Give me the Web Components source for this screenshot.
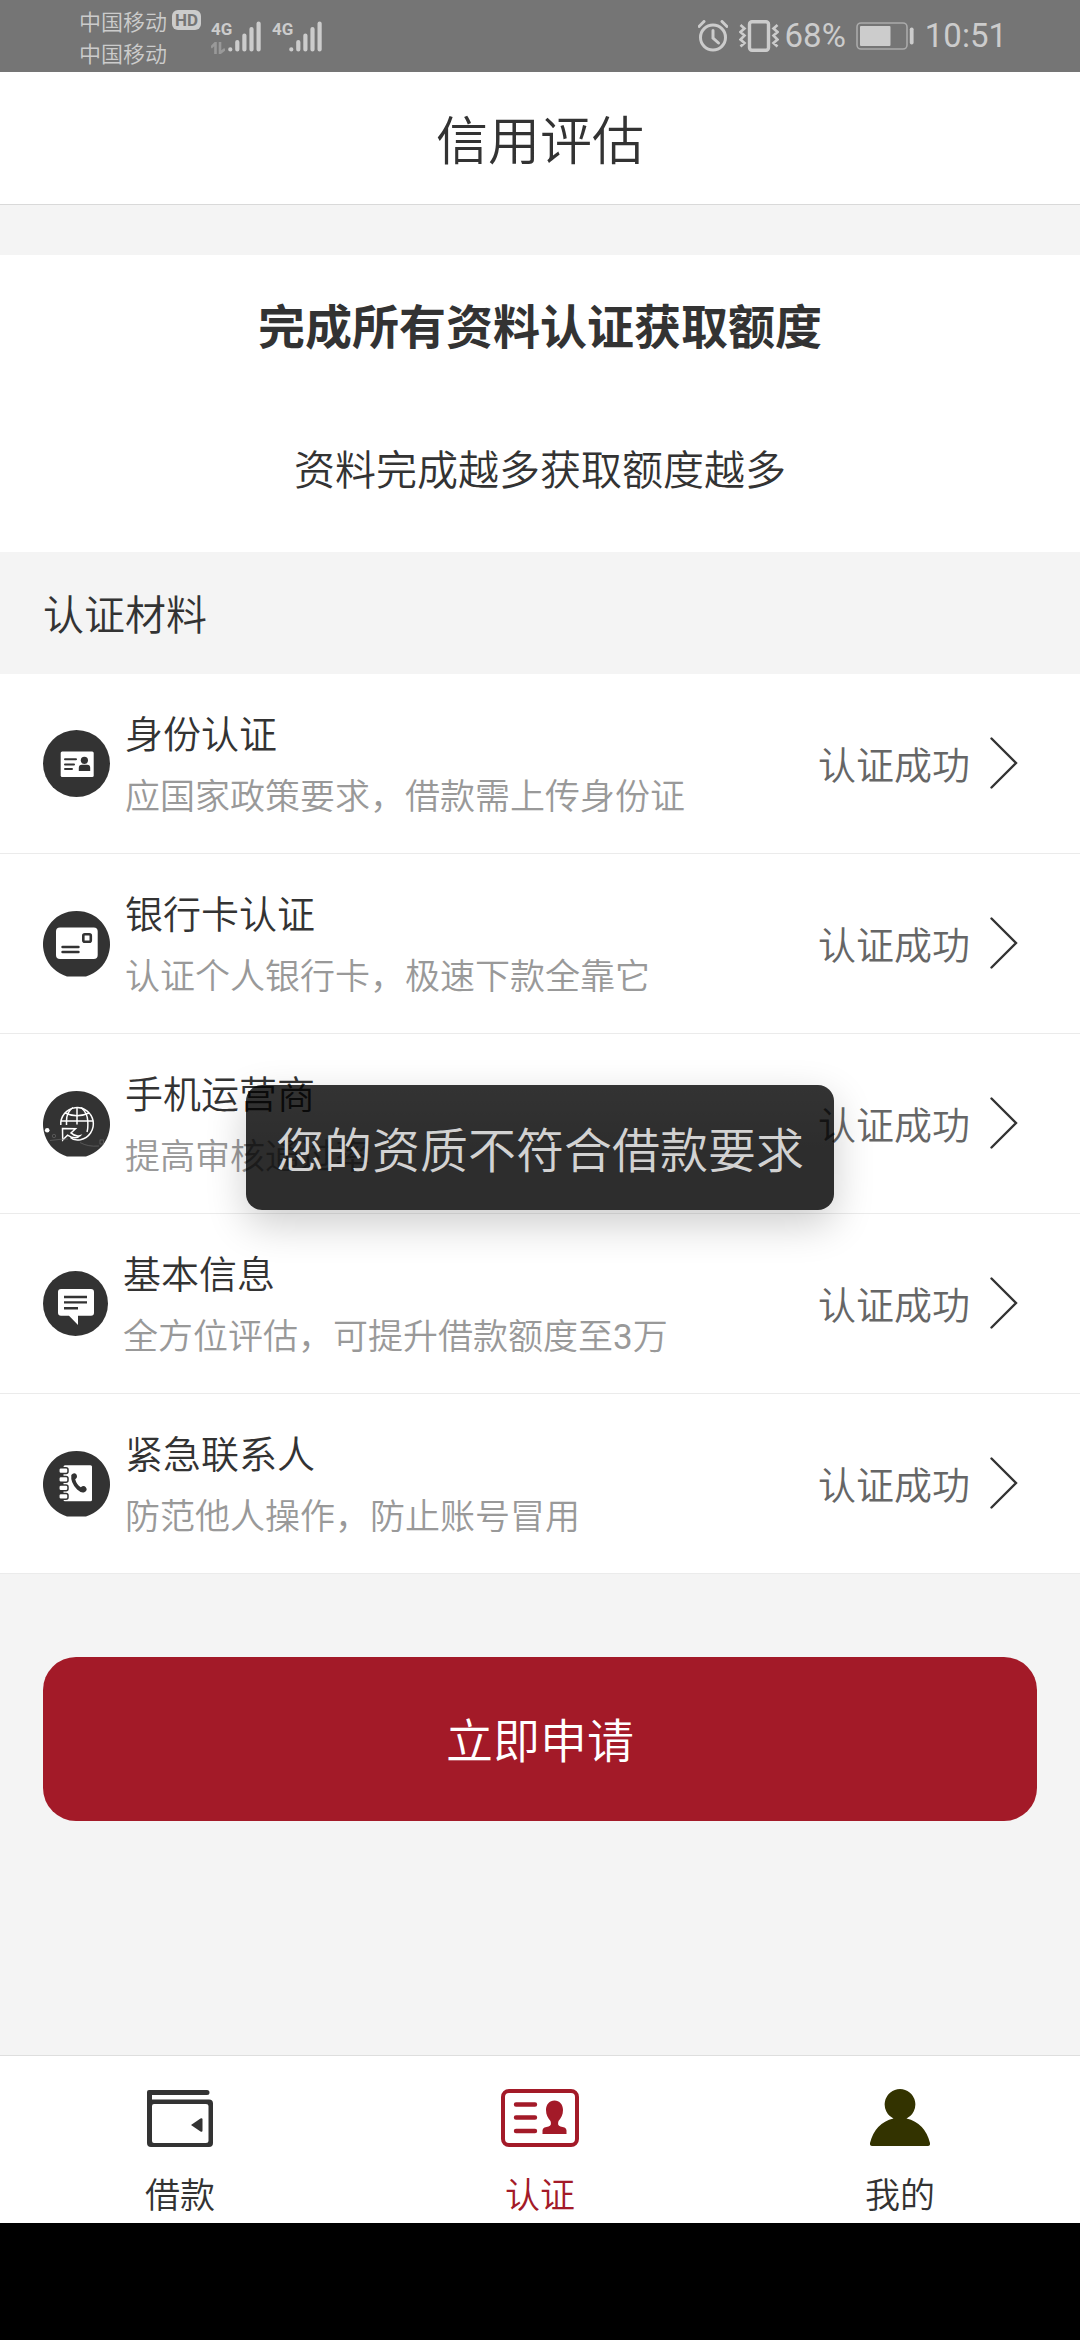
<!DOCTYPE html>
<html lang="zh-CN">
<head>
<meta charset="utf-8">
<meta name="viewport" content="width=device-width, initial-scale=1">
<title>信用评估</title>
<style>
  html, body { margin: 0; }
  body {
    font-family: "Noto Sans CJK SC", sans-serif;
    font-weight: 350;
    color: #333;
    background: #000;
    --ink: #333;
    --brand: #a31a28;
    --page: #f4f4f4;
    --line: #ebebeb;
    --gutter: 43px;
  }
  .num { font-family: Roboto, sans-serif; font-weight: 400; line-height: 1; }
</style>
</head>
<body>
<phone-frame>
  <status-bar slot="status" carrier="中国移动" battery="68%" time="10:51"></status-bar>
  <app-header>信用评估</app-header>
  <intro-card>
    <span slot="title">完成所有资料认证获取额度</span>
    <span slot="note">资料完成越多获取额度越多</span>
  </intro-card>
  <auth-list heading="认证材料">
    <auth-row icon="identity" name="身份认证" state="认证成功">应国家政策要求，借款需上传身份证</auth-row>
    <auth-row icon="card" name="银行卡认证" state="认证成功">认证个人银行卡，极速下款全靠它</auth-row>
    <auth-row icon="carrier" name="手机运营商" state="认证成功">提高审核通过率</auth-row>
    <auth-row icon="message" name="基本信息" state="认证成功">全方位评估，可提升借款额度至<span class="num">3</span>万</auth-row>
    <auth-row icon="contacts" name="紧急联系人" state="认证成功">防范他人操作，防止账号冒用</auth-row>
  </auth-list>
  <apply-button>立即申请</apply-button>
  <tab-bar slot="tabs">
    <tab-item icon="wallet">借款</tab-item>
    <tab-item icon="badge" active>认证</tab-item>
    <tab-item icon="person">我的</tab-item>
  </tab-bar>
  <toast-message slot="overlay">您的资质不符合借款要求</toast-message>
</phone-frame>

<script>
const ICONS = {
  identity: [67, 67, `<circle cx="33.5" cy="33.5" r="33.5" fill="#333"/>
    <rect x="17.7" y="21.5" width="33" height="25.5" rx="1.5" fill="#fff"/>
    <path d="M22 29.3h11M22 34.6h9M22 39h7" stroke="#333" stroke-width="2" stroke-linecap="round"/>
    <circle cx="41.4" cy="30.3" r="3.6" fill="#333"/>
    <path d="M35.8 41v-3.2q0-3 3-3h5.400q3 0 3 3V41z" fill="#333"/>`],
  card: [67, 67, `<path d="M24 66.500A33.500 33.500 0 1 1 43 66.500z" fill="#333"/>
    <rect x="13" y="17.600" width="41.700" height="31.400" rx="4" fill="#fff"/>
    <rect x="40.300" y="24.300" width="7.500" height="7.500" rx="1.500" fill="none" stroke="#333" stroke-width="2.600"/>
    <path d="M19.500 37h16M19.500 42h16" stroke="#333" stroke-width="2.400" stroke-linecap="round"/>`],
  carrier: [67, 67, `<path d="M24 66.500A33.500 33.500 0 1 1 43 66.500z" fill="#333"/>
    <g fill="none" stroke="#fff" stroke-width="1.500">
      <path d="M17.800 35A16.300 16.300 0 1 1 37.500 49.800Q31 51 27.500 47.500"/>
      <path d="M17.800 31h32.500M34 17v17.500M23.500 35V31Q23.500 22 30 17.500M38 17.500Q44.500 23 44.800 31T44 42"/>
      <path d="M22 23Q34 28.500 46 23"/>
      <path d="M19.500 38.500l13 .2-4.500 4.200q4 4 9 2.800-4.500 4.500-12.500-.5l-4.800 4.800z"/>
    </g>
    <circle cx="4.200" cy="40.300" r="2.300" fill="#fff"/>
    <g fill="none" stroke="#666" stroke-width=".7"><circle cx="11" cy="46" r="1.700"/><path d="M7 50.500Q18 49 25 49M37 52.500Q45 57 56 56"/><rect x="57" y="50" width="3.400" height="4"/></g>`],
  message: [65, 65, `<circle cx="32.500" cy="32.500" r="32.500" fill="#333"/>
    <path d="M18 18h30q3 0 3 3v20.700q0 3-3 3H35V54L26 44.700h-8q-3 0-3-3V21q0-3 3-3z" fill="#fff"/>
    <path d="M21 26h23M21 31.400h23M21 37.300h14" stroke="#333" stroke-width="2.400"/>`],
  contacts: [67, 67, `<path d="M24 66.500A33.500 33.500 0 1 1 43 66.500z" fill="#333"/>
    <rect x="20.500" y="15.300" width="28.500" height="36" rx="1.500" fill="#fff"/>
    <g fill="#fff" stroke="#333" stroke-width="1.500"><rect x="15.800" y="17.800" width="9.200" height="5.800" rx="2"/><rect x="15.800" y="26.400" width="9.200" height="5.800" rx="2"/><rect x="15.800" y="34.900" width="9.200" height="5.800" rx="2"/><rect x="15.800" y="43.400" width="9.200" height="5.800" rx="2"/></g>
    <path d="M28.300 25q2.700-3.200 5.200-.5 1.500 3-1.300 4.700 1.300 5.200 5.600 8 3-2.200 5 0 2.400 3-1.500 5-3.300 1-7.200-2.700-6.800-6.800-5.800-14.500z" fill="#333"/>`],
  chevron: [28, 52, `<path d="M1.500 1.500L26 26 1.500 50.500" fill="none" stroke="#333" stroke-width="2.400" stroke-linecap="round"/>`],
  wallet: [66, 58, `<path fill-rule="evenodd" d="M2 1h58q2.500 0 2.500 2.500T60 6H5v4.500h57q4 0 4 4V54q0 4-4 4H4q-4 0-4-4V3q0-2 2-2zM7 15q-2 0-2 2v35q0 2 2 2h52q2.500 0 2.500-2V17q0-2-2.500-2z" fill="#333"/>
    <path d="M44 36l9.500-6.500q2-1 2 1v11q0 2-2 1z" fill="#333"/>`],
  badge: [78, 58, `<rect x="2" y="2" width="74" height="54" rx="6" fill="none" stroke="#a31a28" stroke-width="4"/>
    <path d="M15 15.500h19M15 28.500h19M15 42h19" stroke="#a31a28" stroke-width="4.400" stroke-linecap="round"/>
    <path d="M53.500 11.500c5 0 8.500 4 8.500 9.500 0 5-2 8-4.500 11q-1.500 4.500 2 5.500l4 1q2 .8 2 3V45H41.500v-3.500q0-2.200 2-3l4-1q3.500-1 2-5.500C47 29 45 26 45 21c0-5.500 3.500-9.500 8.500-9.500z" fill="#a31a28"/>`],
  person: [60, 58, `<path d="M30 0a15.500 15.500 0 0 1 6.500 29.500Q55 34 60 54q.5 3-2.500 3h-55Q-.5 57 0 54 5 34 23.500 29.500A15.500 15.500 0 0 1 30 0z" fill="#333300"/>`],
  signal: [34, 32, `<path d="M2.300 29.300v.1M9.300 22v7.400M16.400 15.500v13.900M23.500 9v20.400M30.600 3.500v25.900" stroke="#ccc" stroke-width="4.200" stroke-linecap="round"/>`],
  data: [14, 12, `<path d="M4.500 12V1L0 5.500M9 0v11l5-4" fill="none" stroke="#999" stroke-width="2.600"/>`],
  alarm: [30, 32, `<g fill="none" stroke="#ccc" stroke-width="3"><circle cx="15" cy="17.500" r="12.500"/><path d="M15 10.500V18l5.500 5" stroke-linecap="round"/><path d="M1 6.500L6 1.500M24 1.500l5 5" stroke-linecap="round"/></g>`],
  vibrate: [40, 32, `<g fill="none" stroke="#ccc"><rect x="10.500" y="1.800" width="19" height="28.400" rx="2.500" stroke-width="3.400"/><path d="M1.500 5l4 3.500-4 3.500 4 3.500-4 4 4 3.500-4 3.500M38.500 5l-4 3.500 4 3.500-4 3.500 4 4-4 3.500 4 3.500" stroke-width="2.600"/></g>`],
  battery: [58, 28, `<rect x="1" y="1" width="50" height="26" rx="4" fill="none" stroke="#aaa" stroke-width="1.600"/><rect x="4" y="4" width="30.500" height="20" rx="1" fill="#ccc"/><rect x="53.800" y="5.500" width="3.800" height="17" rx="1.800" fill="#ccc"/>`]
};

function define(name, render) {
  customElements.define(name, class extends HTMLElement {
    connectedCallback() {
      if (this.shadowRoot) return;
      const template = document.createElement('template');
      template.innerHTML = render(this);
      this.attachShadow({ mode: 'open' }).append(template.content.cloneNode(true));
    }
  });
}
const attr = (el, key) => el.getAttribute(key) || '';

define('ui-icon', el => {
  const [w, h, art] = ICONS[attr(el, 'name')];
  return `<style>:host{display:block;flex:none}svg{display:block}</style>
    <svg width="${w}" height="${h}" viewBox="0 0 ${w} ${h}" aria-hidden="true">${art}</svg>`;
});

define('phone-frame', () => `
  <style>
    :host { display: flex; flex-direction: column; min-height: 100vh; }
    .app { position: relative; flex: 1; display: flex; flex-direction: column; background: var(--page); }
    main { flex: 1; }
    .overlay { position: absolute; inset: 0; display: flex; align-items: center; justify-content: center; pointer-events: none; }
    .nav { height: 117px; background: #000; }
  </style>
  <slot name="status"></slot>
  <div class="app">
    <main><slot></slot></main>
    <slot name="tabs"></slot>
    <div class="overlay"><slot name="overlay"></slot></div>
  </div>
  <div class="nav"></div>`);

define('status-bar', el => `
  <style>
    :host { display: flex; justify-content: space-between; align-items: center; height: 72px; box-sizing: border-box; padding: 0 73px 0 79px; background: #757575; color: #ccc; }
    .left, .right, .line, .net { display: flex; }
    .left { gap: 10px; }
    .line { align-items: center; gap: 5px; font-size: 22px; line-height: 32px; }
    .hd { font: 700 17px/20px Roboto, sans-serif; padding: 0 3px; border-radius: 6px; background: #ccc; color: #757575; }
    .nets { display: flex; gap: 10px; align-items: center; }
    .kind { font: 700 17px/18px Roboto, sans-serif; width: 17px; display: flex; flex-direction: column; gap: 4px; height: 32px; }
    .right { align-items: center; font: 400 33px/40px Roboto, sans-serif; }
    .alarm { margin-right: 11px; }
    .level { margin: 0 10px 0 6px; }
    .clock { margin-left: 11px; }
  </style>
  <div class="left">
    <div>
      <div class="line">${attr(el, 'carrier')}<span class="hd">HD</span></div>
      <div class="line">${attr(el, 'carrier')}</div>
    </div>
    <div class="nets">
      <div class="net"><span class="kind">4G<ui-icon name="data"></ui-icon></span><ui-icon name="signal"></ui-icon></div>
      <div class="net"><span class="kind">4G</span><ui-icon name="signal"></ui-icon></div>
    </div>
  </div>
  <div class="right">
    <ui-icon class="alarm" name="alarm"></ui-icon>
    <ui-icon name="vibrate"></ui-icon>
    <span class="level">${attr(el, 'battery')}</span>
    <ui-icon name="battery"></ui-icon>
    <time class="clock">${attr(el, 'time')}</time>
  </div>`);

define('app-header', () => `
  <style>
    :host { display: block; background: #fff; border-bottom: 1px solid #d9d9d9; }
    h1 { margin: 0; font-size: 52px; font-weight: inherit; line-height: 132px; text-align: center; }
  </style>
  <h1><slot></slot></h1>`);

define('intro-card', () => `
  <style>
    :host { display: flex; flex-direction: column; gap: 77px; margin-top: 50px; padding: 34px 0 54px; background: #fff; text-align: center; }
    h2, p { margin: 0; }
    h2 { font-size: 47px; line-height: 70px; font-weight: 700; }
    p { font-size: 41px; line-height: 62px; }
  </style>
  <h2><slot name="title"></slot></h2>
  <p><slot name="note"></slot></p>`);

define('auth-list', el => `
  <style>
    :host { display: block; }
    h3 { margin: 0; padding: 29px var(--gutter) 31px; font-size: 41px; line-height: 62px; font-weight: inherit; }
  </style>
  <h3>${attr(el, 'heading')}</h3>
  <slot></slot>`);

define('auth-row', el => `
  <style>
    :host { display: block; background: #fff; border-bottom: 1px solid var(--line); }
    a { display: flex; align-items: center; padding: 27px 62px 28px var(--gutter); color: inherit; text-decoration: none; line-height: 62px; }
    .text { flex: 1; margin-left: 15px; }
    .name { font-size: 38px; }
    .desc { font-size: 35px; color: #999; }
    .state { font-size: 38px; color: #666; margin-right: 20px; }
  </style>
  <a href="#">
    <ui-icon name="${attr(el, 'icon')}"></ui-icon>
    <div class="text">
      <div class="name">${attr(el, 'name')}</div>
      <div class="desc"><slot></slot></div>
    </div>
    <span class="state">${attr(el, 'state')}</span>
    <ui-icon name="chevron"></ui-icon>
  </a>`);

define('apply-button', () => `
  <style>
    :host { display: block; padding: 83px var(--gutter); }
    button { display: block; width: 100%; padding: 46px 0 48px; border: 0; border-radius: 33px; background: var(--brand); color: #fff; font: inherit; font-size: 47px; line-height: 70px; }
  </style>
  <button type="button"><slot></slot></button>`);

define('tab-bar', () => `
  <style>
    :host { display: block; background: #fff; border-top: 1px solid #dedede; }
    nav { display: flex; }
  </style>
  <nav><slot></slot></nav>`);

define('tab-item', el => `
  <style>
    :host { display: block; flex: 1; color: var(--ink); }
    :host([active]) { color: var(--brand); }
    a { display: flex; flex-direction: column; align-items: center; gap: 21px; padding: 33px 0 5px; color: inherit; text-decoration: none; font-size: 35px; line-height: 50px; }
  </style>
  <a href="#"><ui-icon name="${attr(el, 'icon')}"></ui-icon><span><slot></slot></span></a>`);

define('toast-message', () => `
  <style>
    :host { display: block; padding: 27px 30px; border-radius: 16px; color: #d2d2d2; font-size: 48px; line-height: 71px;
      background: linear-gradient(rgba(0,0,0,.8), rgba(0,0,0,.825) 50%); box-shadow: 0 14px 40px rgba(0,0,0,.2); }
  </style>
  <div role="status"><slot></slot></div>`);
</script>
</body>
</html>
